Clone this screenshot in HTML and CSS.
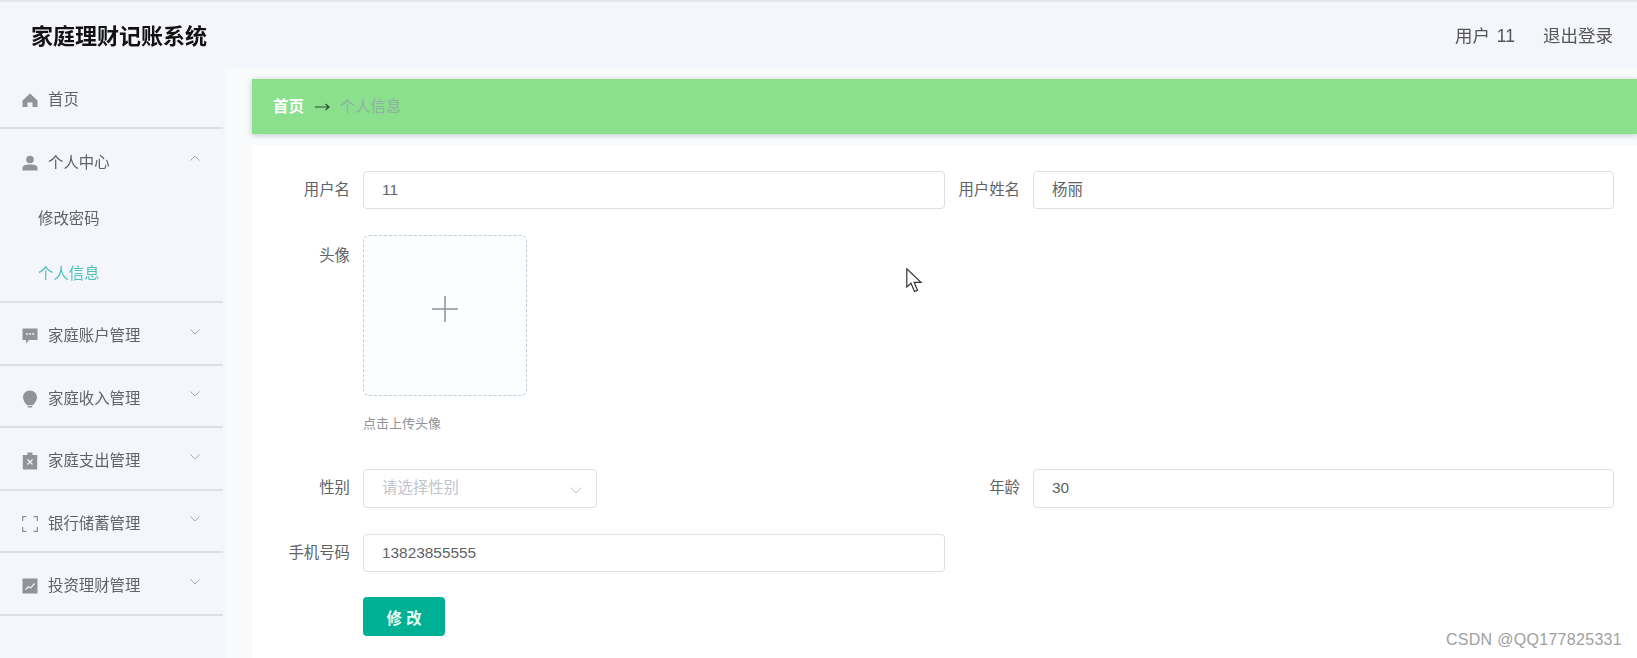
FILE: index.html
```html
<!DOCTYPE html>
<html lang="zh-CN">
<head>
<meta charset="utf-8">
<title>家庭理财记账系统</title>
<link rel="stylesheet" href="styles.css">
</head>
<body>
<div class="app">
  <header class="topbar">
    <h1 class="brand">家庭理财记账系统</h1>
    <div class="account"><span>用户 11</span><span>退出登录</span></div>
  </header>
  <div class="body-row">
    <nav class="sidebar">
      <div class="menu-row menu-home">
        <svg class="icon" viewBox="0 0 16 16"><path d="M8 1.500 15.500 8.500V15H10.500V10.500H5.500V15H.5V8.500Z"/></svg>
        <span>首页</span>
      </div>
      <div class="menu-group">
        <div class="menu-row menu-head">
          <svg class="icon" viewBox="0 0 16 16"><circle cx="8" cy="4.500" r="3.800"/><path d="M.5 15.500V13C.5 10.500 3 9.500 8 9.500S15.500 10.500 15.500 13V15.500Z"/></svg>
          <span>个人中心</span>
          <svg class="chev" viewBox="0 0 10 6"><path d="M.5 5.500 5 1 9.500 5.500"/></svg>
        </div>
        <div class="submenu">修改密码</div>
        <div class="submenu submenu-active">个人信息</div>
      </div>
      <div class="menu-row">
        <svg class="icon" viewBox="0 0 16 16"><path d="M.5 .5H15.500V12H7L4 15.500V12H.5Z"/><g class="knock"><circle cx="4.800" cy="6" r="1"/><circle cx="8" cy="6" r="1"/><circle cx="11.200" cy="6" r="1"/></g></svg>
        <span>家庭账户管理</span>
        <svg class="chev" viewBox="0 0 10 6"><path d="M.5 .5 5 5 9.500 .5"/></svg>
      </div>
      <div class="menu-row">
        <svg class="icon icon-tall" viewBox="0 0 16 18"><path d="M8 .5C12 .5 15 3.500 15 7.300 15 10.500 12.800 13.500 10.800 15.200H5.200C3.200 13.500 1 10.500 1 7.300 1 3.500 4 .5 8 .5ZM5.800 16H10.200V17.500H5.800Z"/></svg>
        <span>家庭收入管理</span>
        <svg class="chev" viewBox="0 0 10 6"><path d="M.5 .5 5 5 9.500 .5"/></svg>
      </div>
      <div class="menu-row">
        <svg class="icon icon-tall" viewBox="0 0 16 18"><path d="M.8 3H5.500V.5H10.500V3H15.200V17.500H.8Z"/><path class="knock-line" d="M5.500 7.500 10.500 12.500M10.500 7.500 5.500 12.500"/></svg>
        <span>家庭支出管理</span>
        <svg class="chev" viewBox="0 0 10 6"><path d="M.5 .5 5 5 9.500 .5"/></svg>
      </div>
      <div class="menu-row">
        <svg class="icon icon-line" viewBox="0 0 16 16"><path d="M.5 5V.5H4.500M11.500 .5H15.500V5M15.500 11V15.500H11.500M4.500 15.500H.5V11"/></svg>
        <span>银行储蓄管理</span>
        <svg class="chev" viewBox="0 0 10 6"><path d="M.5 .5 5 5 9.500 .5"/></svg>
      </div>
      <div class="menu-row">
        <svg class="icon" viewBox="0 0 16 16"><path d="M.5 .5H15.500V15.500H.5Z"/><path class="knock-line" d="M3.500 11.500 6.500 8.800 8.800 9.800 12.500 5.500"/></svg>
        <span>投资理财管理</span>
        <svg class="chev" viewBox="0 0 10 6"><path d="M.5 .5 5 5 9.500 .5"/></svg>
      </div>
    </nav>
    <main class="content">
      <div class="crumbs">
        <strong>首页</strong>
        <svg class="crumb-arrow" viewBox="0 0 15 8"><path d="M0 4H14M10.500 1 14 4 10.500 7"/></svg>
        <span>个人信息</span>
      </div>
      <form class="form">
        <label class="lbl">用户名</label>
        <div class="field">11</div>
        <label class="lbl">用户姓名</label>
        <div class="field">杨丽</div>

        <label class="lbl lbl-top">头像</label>
        <div class="upload-cell">
          <div class="upload">
            <svg class="plus" viewBox="0 0 26 26"><path d="M13 0V26M0 13H26"/></svg>
          </div>
          <div class="hint">点击上传头像</div>
        </div>
        <div class="filler"></div>

        <label class="lbl">性别</label>
        <div class="field-slot">
          <div class="field select">
            <span>请选择性别</span>
            <svg class="select-chev" viewBox="0 0 12 7"><path d="M.5 .5 6 6 11.500 .5"/></svg>
          </div>
        </div>
        <label class="lbl">年龄</label>
        <div class="field">30</div>

        <label class="lbl">手机号码</label>
        <div class="field">13823855555</div>
        <div class="filler"></div>

        <div class="btn-cell"><button class="btn" type="button">修 改</button></div>
      </form>
    </main>
  </div>
  <svg class="cursor" viewBox="0 0 17 25"><path d="M.8.8V19L5 15.200 8.500 23.500 11.500 22.300 8.200 14.300H15Z"/></svg>
  <div class="watermark">CSDN @QQ177825331</div>
</div>
</body>
</html>
```
FILE: styles.css
```css
* { box-sizing: border-box; }
html, body { margin: 0; height: 100%; }
body {
  background: #f4f6fb;
  font-family: "Liberation Sans", "Noto Sans CJK SC", sans-serif;
  font-size: 15.4px;
  line-height: 22px;
  color: #606266;
  overflow: hidden;
}
.app {
  height: 658px;
  position: relative;
  overflow: hidden;
  filter: blur(0.35px);
}
.topbar {
  height: 68px;
  border-top: 2px solid #e6e7ea;
  padding: 4px 24px 0 31px;
  display: flex;
  align-items: center;
  justify-content: space-between;
}
.brand { margin: 0; font-size: 22px; font-weight: 700; color: #111; }
.account { display: flex; gap: 28px; margin-bottom: 2px; font-size: 17.5px; word-spacing: 2px; color: #555; }
.body-row { display: flex; height: 590px; }
.sidebar { width: 225px; padding-right: 2px; background: #f4f6fb; flex: none; }
.menu-row {
  height: 62.5px;
  padding: 6px 23px 0 22px;
  display: flex;
  align-items: center;
  border-bottom: 2px solid #dcdfe4;
}
.menu-home { height: 61px; padding-top: 4px; }
.menu-head { border-bottom: 0; height: 62px; padding-top: 5px; }
.menu-group { border-bottom: 2px solid #dcdfe4; }
.icon { width: 16px; height: 16px; margin-right: 10px; flex: none; fill: #909399; }
.icon-tall { height: 18px; }
.icon-line { fill: none; stroke: #909399; stroke-width: 1.6; }
.knock { fill: #f4f6fb; }
.knock-line { fill: none; stroke: #f4f6fb; stroke-width: 1.200; }
.chev {
  width: 10px; height: 6px; margin-left: auto; margin-top: -9px;
  fill: none; stroke: #a4a8af; stroke-width: 1;
}
.submenu { height: 55px; padding-left: 38px; display: flex; align-items: center; }
.submenu-active { color: #4cc4bd; }
.content { flex: 1; padding-left: 27px; background: #f8fafb; }
.crumbs {
  height: 55px;
  margin-top: 11px;
  padding-left: 21px;
  display: flex;
  align-items: center;
  background: #8ae08d;
  box-shadow: 0 1px 6px rgba(0, 0, 0, .22);
  color: #90b1a3;
}
.crumbs strong { color: #fff; font-weight: 700; }
.crumb-arrow { width: 15px; height: 8px; margin: 0 10px 0 11px; fill: none; stroke: #2f4a35; stroke-width: 1.200; }
.form {
  margin-top: 11px;
  height: 513px;
  padding-top: 26px;
  background: #fff;
  display: grid;
  grid-template-columns: 111px 582px 88px 581px;
  grid-template-rows: 38px 208.500px 39.500px 38px 40px;
  row-gap: 25.500px;
  align-content: start;
}
.lbl { display: flex; align-items: center; justify-content: flex-end; padding-right: 13px; }
.lbl-top { align-items: flex-start; padding-top: 10px; }
.field {
  height: 100%;
  padding-left: 18px;
  display: flex;
  align-items: center;
  background: #fff;
  border: 1px solid #dcdfe6;
  border-radius: 4px;
}
.field-slot { width: 234px; }
.select { justify-content: space-between; padding-right: 14px; color: #c0c4cc; }
.select-chev { width: 12px; height: 7px; fill: none; stroke: #c0c4cc; stroke-width: 1; margin-top: 4px; }
.upload-cell { grid-column: 2; }
.filler { grid-column: 3 / 5; }
.upload {
  width: 164px;
  height: 161px;
  padding-bottom: 12px;
  display: flex;
  align-items: center;
  justify-content: center;
  background: #fbfdff;
  border: 1px dashed #c0ccda;
  border-radius: 6px;
}
.plus { width: 26px; height: 26px; fill: none; stroke: #8c939d; stroke-width: 1.500; }
.hint { margin-top: 18px; font-size: 13px; line-height: 19px; color: #909399; }
.btn-cell { grid-column: 2; }
.btn {
  width: 82px;
  height: 39px;
  background: #00b094;
  border: 0;
  border-radius: 4px;
  color: #e6fff8;
  font: 700 15.4px "Liberation Sans", "Noto Sans CJK SC", sans-serif;
}
.cursor {
  position: absolute;
  left: 906px;
  top: 268px;
  width: 17px;
  height: 25px;
  fill: #fff;
  stroke: #333;
  stroke-width: 1.200;
}
.watermark {
  position: absolute;
  right: 15px;
  bottom: 9px;
  font: 16px "Liberation Sans", sans-serif;
  letter-spacing: .3px;
  color: #a0a0a0;
}
```
